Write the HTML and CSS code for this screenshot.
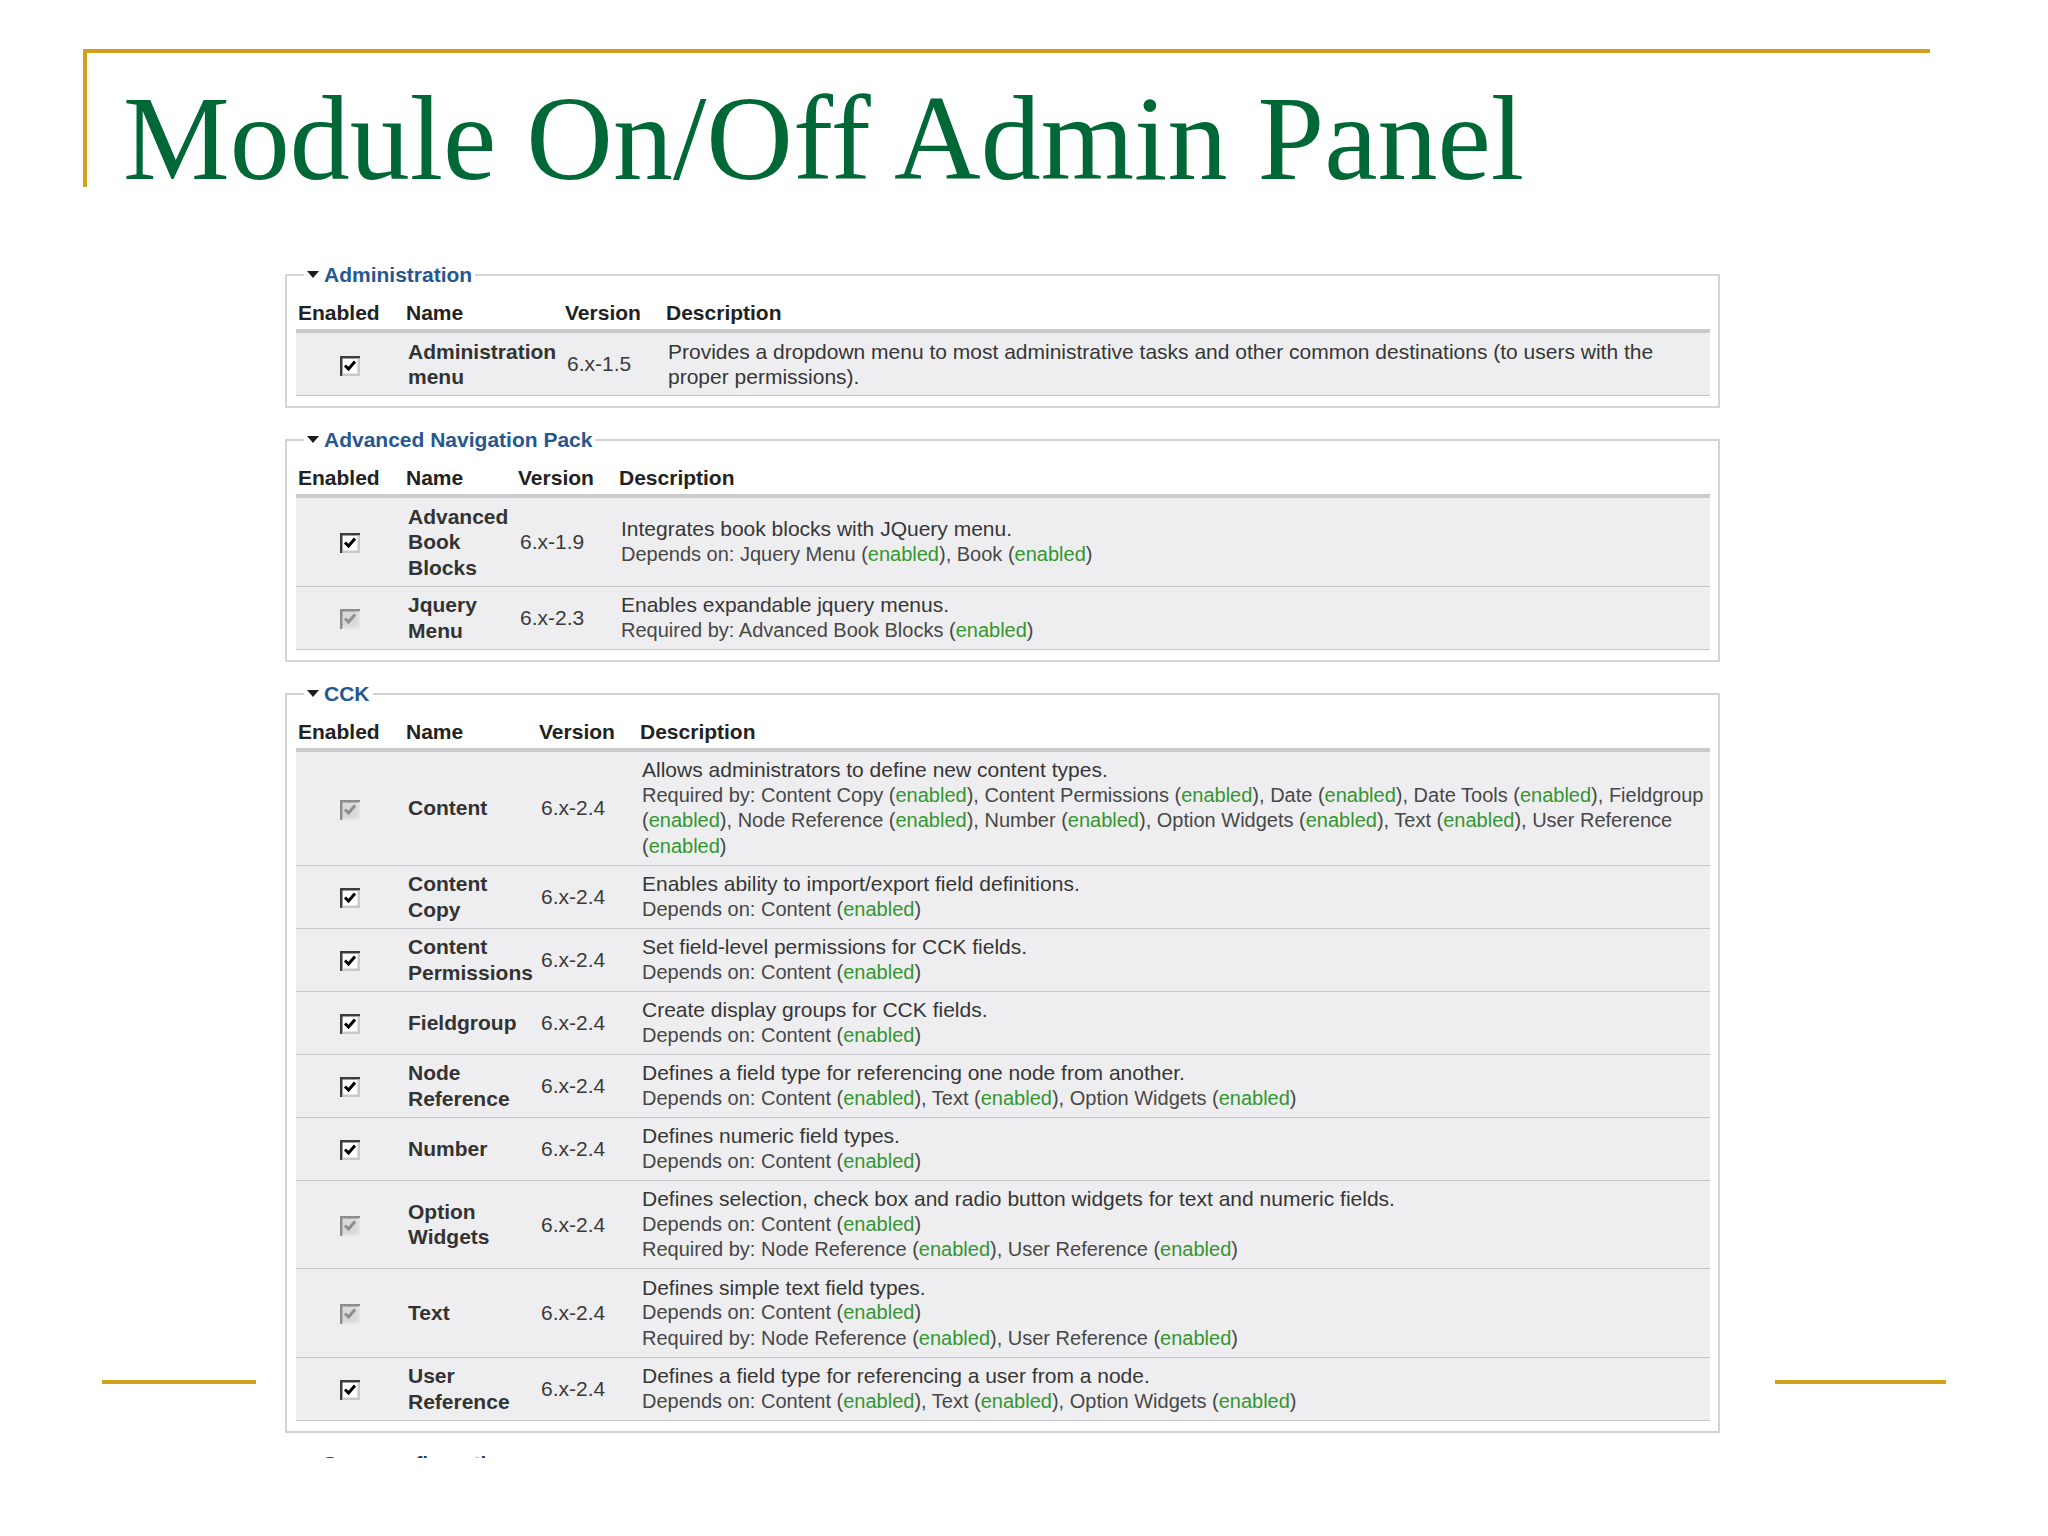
FILE: index.html
```html
<!DOCTYPE html>
<html lang="en">
<head>
<meta charset="utf-8">
<title>Module On/Off Admin Panel</title>
<link rel="stylesheet" href="styles.css">
</head>
<body>
<div class="slide">
  <div class="title-frame">
    <h1 class="title">Module On/Off Admin Panel</h1>
  </div>

  <div class="rule rule-left"></div>
  <div class="rule rule-right"></div>

  <div class="panel">
    <fieldset class="group">
      <legend><span class="caret"></span>Administration</legend>
      <table class="modules t-admin">
        <colgroup><col class="c-en"><col class="c-name"><col class="c-ver"><col></colgroup>
        <thead><tr><th>Enabled</th><th>Name</th><th>Version</th><th>Description</th></tr></thead>
        <tbody>
          <tr>
            <td class="check"><svg class="cb" width="20" height="20" viewBox="0 0 20 20"><rect width="20" height="20" fill="#fff"/><path d="M0 0H20V2.5H2.5V20H0Z" fill="#3c3c3c"/><path d="M17.5 2.5H20V20H2.5V17.5H17.5Z" fill="#c9c9c9"/><path d="M5 9.5L8.5 13L15 5.5" fill="none" stroke="#000" stroke-width="3"/></svg></td>
            <td class="name">Administration menu</td>
            <td class="ver">6.x-1.5</td>
            <td class="desc"><div>Provides a dropdown menu to most administrative tasks and other common destinations (to users with the<br>proper permissions).</div></td>
          </tr>
        </tbody>
      </table>
    </fieldset>

    <fieldset class="group">
      <legend><span class="caret"></span>Advanced Navigation Pack</legend>
      <table class="modules t-nav">
        <colgroup><col class="c-en"><col class="c-name"><col class="c-ver"><col></colgroup>
        <thead><tr><th>Enabled</th><th>Name</th><th>Version</th><th>Description</th></tr></thead>
        <tbody>
          <tr>
            <td class="check"><svg class="cb" width="20" height="20" viewBox="0 0 20 20"><rect width="20" height="20" fill="#fff"/><path d="M0 0H20V2.5H2.5V20H0Z" fill="#3c3c3c"/><path d="M17.5 2.5H20V20H2.5V17.5H17.5Z" fill="#c9c9c9"/><path d="M5 9.5L8.5 13L15 5.5" fill="none" stroke="#000" stroke-width="3"/></svg></td>
            <td class="name">Advanced Book Blocks</td>
            <td class="ver">6.x-1.9</td>
            <td class="desc"><div>Integrates book blocks with JQuery menu.</div><div class="dep">Depends on: Jquery Menu (<span class="on">enabled</span>), Book (<span class="on">enabled</span>)</div></td>
          </tr>
          <tr>
            <td class="check"><svg class="cb" width="20" height="20" viewBox="0 0 20 20"><rect width="20" height="20" fill="#d9d9db"/><path d="M0 0H20V2.5H2.5V20H0Z" fill="#8c8c8c"/><path d="M17.5 2.5H20V20H2.5V17.5H17.5Z" fill="#e4e4e4"/><path d="M5 9.5L8.5 13L15 5.5" fill="none" stroke="#8f8f8f" stroke-width="3"/></svg></td>
            <td class="name">Jquery Menu</td>
            <td class="ver">6.x-2.3</td>
            <td class="desc"><div>Enables expandable jquery menus.</div><div class="dep">Required by: Advanced Book Blocks (<span class="on">enabled</span>)</div></td>
          </tr>
        </tbody>
      </table>
    </fieldset>

    <fieldset class="group">
      <legend><span class="caret"></span>CCK</legend>
      <table class="modules t-cck">
        <colgroup><col class="c-en"><col class="c-name"><col class="c-ver"><col></colgroup>
        <thead><tr><th>Enabled</th><th>Name</th><th>Version</th><th>Description</th></tr></thead>
        <tbody>
          <tr>
            <td class="check"><svg class="cb" width="20" height="20" viewBox="0 0 20 20"><rect width="20" height="20" fill="#d9d9db"/><path d="M0 0H20V2.5H2.5V20H0Z" fill="#8c8c8c"/><path d="M17.5 2.5H20V20H2.5V17.5H17.5Z" fill="#e4e4e4"/><path d="M5 9.5L8.5 13L15 5.5" fill="none" stroke="#8f8f8f" stroke-width="3"/></svg></td>
            <td class="name">Content</td>
            <td class="ver">6.x-2.4</td>
            <td class="desc"><div>Allows administrators to define new content types.</div><div class="dep">Required by: Content Copy (<span class="on">enabled</span>), Content Permissions (<span class="on">enabled</span>), Date (<span class="on">enabled</span>), Date Tools (<span class="on">enabled</span>), Fieldgroup<br>(<span class="on">enabled</span>), Node Reference (<span class="on">enabled</span>), Number (<span class="on">enabled</span>), Option Widgets (<span class="on">enabled</span>), Text (<span class="on">enabled</span>), User Reference<br>(<span class="on">enabled</span>)</div></td>
          </tr>
          <tr>
            <td class="check"><svg class="cb" width="20" height="20" viewBox="0 0 20 20"><rect width="20" height="20" fill="#fff"/><path d="M0 0H20V2.5H2.5V20H0Z" fill="#3c3c3c"/><path d="M17.5 2.5H20V20H2.5V17.5H17.5Z" fill="#c9c9c9"/><path d="M5 9.5L8.5 13L15 5.5" fill="none" stroke="#000" stroke-width="3"/></svg></td>
            <td class="name">Content Copy</td>
            <td class="ver">6.x-2.4</td>
            <td class="desc"><div>Enables ability to import/export field definitions.</div><div class="dep">Depends on: Content (<span class="on">enabled</span>)</div></td>
          </tr>
          <tr>
            <td class="check"><svg class="cb" width="20" height="20" viewBox="0 0 20 20"><rect width="20" height="20" fill="#fff"/><path d="M0 0H20V2.5H2.5V20H0Z" fill="#3c3c3c"/><path d="M17.5 2.5H20V20H2.5V17.5H17.5Z" fill="#c9c9c9"/><path d="M5 9.5L8.5 13L15 5.5" fill="none" stroke="#000" stroke-width="3"/></svg></td>
            <td class="name">Content Permissions</td>
            <td class="ver">6.x-2.4</td>
            <td class="desc"><div>Set field-level permissions for CCK fields.</div><div class="dep">Depends on: Content (<span class="on">enabled</span>)</div></td>
          </tr>
          <tr>
            <td class="check"><svg class="cb" width="20" height="20" viewBox="0 0 20 20"><rect width="20" height="20" fill="#fff"/><path d="M0 0H20V2.5H2.5V20H0Z" fill="#3c3c3c"/><path d="M17.5 2.5H20V20H2.5V17.5H17.5Z" fill="#c9c9c9"/><path d="M5 9.5L8.5 13L15 5.5" fill="none" stroke="#000" stroke-width="3"/></svg></td>
            <td class="name">Fieldgroup</td>
            <td class="ver">6.x-2.4</td>
            <td class="desc"><div>Create display groups for CCK fields.</div><div class="dep">Depends on: Content (<span class="on">enabled</span>)</div></td>
          </tr>
          <tr>
            <td class="check"><svg class="cb" width="20" height="20" viewBox="0 0 20 20"><rect width="20" height="20" fill="#fff"/><path d="M0 0H20V2.5H2.5V20H0Z" fill="#3c3c3c"/><path d="M17.5 2.5H20V20H2.5V17.5H17.5Z" fill="#c9c9c9"/><path d="M5 9.5L8.5 13L15 5.5" fill="none" stroke="#000" stroke-width="3"/></svg></td>
            <td class="name">Node Reference</td>
            <td class="ver">6.x-2.4</td>
            <td class="desc"><div>Defines a field type for referencing one node from another.</div><div class="dep">Depends on: Content (<span class="on">enabled</span>), Text (<span class="on">enabled</span>), Option Widgets (<span class="on">enabled</span>)</div></td>
          </tr>
          <tr>
            <td class="check"><svg class="cb" width="20" height="20" viewBox="0 0 20 20"><rect width="20" height="20" fill="#fff"/><path d="M0 0H20V2.5H2.5V20H0Z" fill="#3c3c3c"/><path d="M17.5 2.5H20V20H2.5V17.5H17.5Z" fill="#c9c9c9"/><path d="M5 9.5L8.5 13L15 5.5" fill="none" stroke="#000" stroke-width="3"/></svg></td>
            <td class="name">Number</td>
            <td class="ver">6.x-2.4</td>
            <td class="desc"><div>Defines numeric field types.</div><div class="dep">Depends on: Content (<span class="on">enabled</span>)</div></td>
          </tr>
          <tr>
            <td class="check"><svg class="cb" width="20" height="20" viewBox="0 0 20 20"><rect width="20" height="20" fill="#d9d9db"/><path d="M0 0H20V2.5H2.5V20H0Z" fill="#8c8c8c"/><path d="M17.5 2.5H20V20H2.5V17.5H17.5Z" fill="#e4e4e4"/><path d="M5 9.5L8.5 13L15 5.5" fill="none" stroke="#8f8f8f" stroke-width="3"/></svg></td>
            <td class="name">Option Widgets</td>
            <td class="ver">6.x-2.4</td>
            <td class="desc"><div>Defines selection, check box and radio button widgets for text and numeric fields.</div><div class="dep">Depends on: Content (<span class="on">enabled</span>)</div><div class="dep">Required by: Node Reference (<span class="on">enabled</span>), User Reference (<span class="on">enabled</span>)</div></td>
          </tr>
          <tr>
            <td class="check"><svg class="cb" width="20" height="20" viewBox="0 0 20 20"><rect width="20" height="20" fill="#d9d9db"/><path d="M0 0H20V2.5H2.5V20H0Z" fill="#8c8c8c"/><path d="M17.5 2.5H20V20H2.5V17.5H17.5Z" fill="#e4e4e4"/><path d="M5 9.5L8.5 13L15 5.5" fill="none" stroke="#8f8f8f" stroke-width="3"/></svg></td>
            <td class="name">Text</td>
            <td class="ver">6.x-2.4</td>
            <td class="desc"><div>Defines simple text field types.</div><div class="dep">Depends on: Content (<span class="on">enabled</span>)</div><div class="dep">Required by: Node Reference (<span class="on">enabled</span>), User Reference (<span class="on">enabled</span>)</div></td>
          </tr>
          <tr>
            <td class="check"><svg class="cb" width="20" height="20" viewBox="0 0 20 20"><rect width="20" height="20" fill="#fff"/><path d="M0 0H20V2.5H2.5V20H0Z" fill="#3c3c3c"/><path d="M17.5 2.5H20V20H2.5V17.5H17.5Z" fill="#c9c9c9"/><path d="M5 9.5L8.5 13L15 5.5" fill="none" stroke="#000" stroke-width="3"/></svg></td>
            <td class="name">User Reference</td>
            <td class="ver">6.x-2.4</td>
            <td class="desc"><div>Defines a field type for referencing a user from a node.</div><div class="dep">Depends on: Content (<span class="on">enabled</span>), Text (<span class="on">enabled</span>), Option Widgets (<span class="on">enabled</span>)</div></td>
          </tr>
        </tbody>
      </table>
    </fieldset>

    <div class="more"><span>Save configuration</span></div>
  </div>
</div>
</body>
</html>
```

FILE: styles.css
```css
html, body {
  margin: 0;
  padding: 0;
  background: #ffffff;
}

.slide {
  position: relative;
  width: 2048px;
  height: 1536px;
  padding-top: 49px;
  box-sizing: border-box;
  overflow: hidden;
  font-family: "Liberation Sans", Arial, sans-serif;
}

.title-frame {
  margin-left: 83px;
  width: 1847px;
  height: 138px;
  box-sizing: border-box;
  border-top: 4px solid #d1a11c;
  border-left: 4px solid #d1a11c;
}

.title {
  margin: 0;
  padding: 26px 0 0 36px;
  font-family: "Liberation Serif", "Times New Roman", serif;
  font-weight: 400;
  font-size: 120px;
  line-height: 120px;
  color: #006837;
  white-space: nowrap;
}

.rule {
  position: absolute;
  top: 1380px;
  height: 4px;
  background: #d1a11c;
}

.rule-left {
  left: 102px;
  width: 154px;
}

.rule-right {
  left: 1775px;
  width: 171px;
}

.panel {
  margin: 76px 0 0 285px;
  width: 1435px;
}

.group {
  margin: 0 0 20px 0;
  padding: 0 8px 10px 9px;
  width: 1435px;
  min-width: 0;
  box-sizing: border-box;
  border: 2px solid #d3d3d5;
}

.group legend {
  margin-left: 8px;
  padding: 0 3px;
  font-size: 21px;
  font-weight: 700;
  line-height: 24px;
  color: #27578f;
}

.caret {
  display: inline-block;
  width: 0;
  height: 0;
  border-left: 6px solid transparent;
  border-right: 6px solid transparent;
  border-top: 7px solid #1d1d1d;
  margin-right: 5px;
  vertical-align: 4px;
}

.modules {
  width: 100%;
  margin-top: 12px;
  border-collapse: collapse;
  table-layout: fixed;
}

.c-en { width: 108px; }
.c-ver { width: 101px; }
.t-admin .c-name { width: 159px; }
.t-nav .c-name { width: 112px; }
.t-cck .c-name { width: 133px; }

.modules th {
  text-align: left;
  font-size: 21px;
  font-weight: 700;
  line-height: 25.5px;
  padding: 1px 0 3.5px 2px;
  color: #222222;
  border-bottom: 4px solid #cbcbcd;
  white-space: nowrap;
}

.modules td {
  padding: 5.5px 3px 5.5px 4px;
  background: #eeeef0;
  border-bottom: 1px solid #c6c6c8;
  vertical-align: middle;
  font-size: 21px;
  line-height: 25.5px;
  color: #333333;
}

.modules td.check {
  text-align: center;
  padding-left: 0;
  padding-right: 0;
}

.cb {
  display: inline-block;
  vertical-align: middle;
}

.modules td.name {
  font-weight: 700;
  color: #333333;
}

.modules td.ver {
  color: #3a3a3a;
}

.modules td.desc {
  white-space: nowrap;
  color: #363636;
}

.dep {
  font-size: 20px;
  color: #474747;
}

.on {
  color: #33962f;
}

.more {
  margin-left: 38px;
  margin-top: 4px;
  height: 5px;
  overflow: hidden;
  font-size: 21px;
  font-weight: 700;
  line-height: 21px;
  color: #1f3b66;
}
```
